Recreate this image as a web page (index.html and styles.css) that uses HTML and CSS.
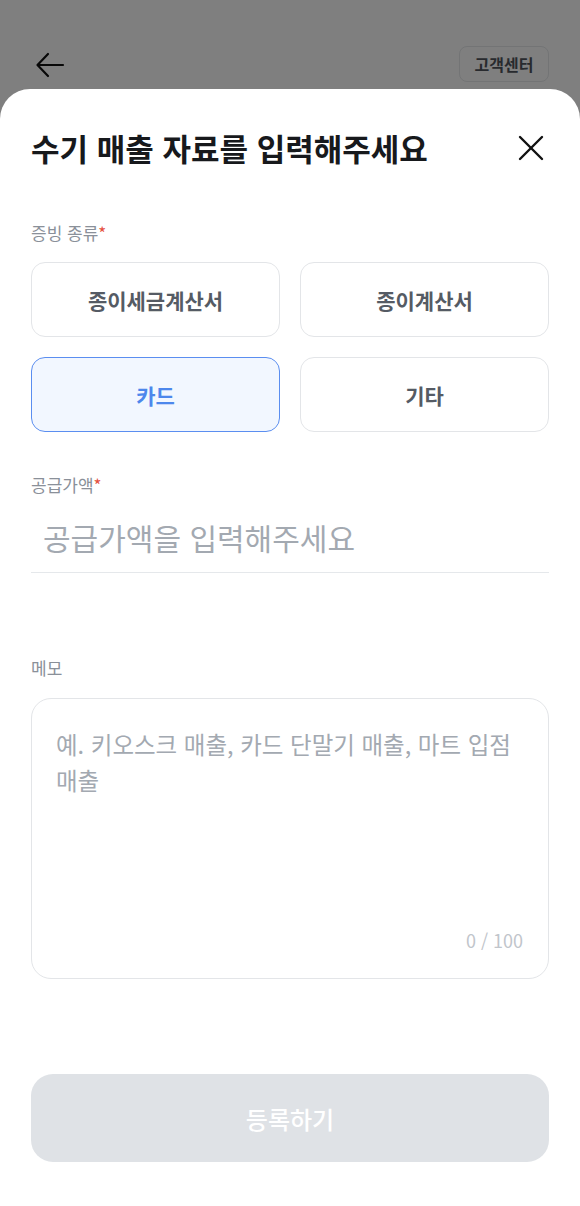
FILE: index.html
```html
<!DOCTYPE html>
<html lang="ko">
<head>
  <meta charset="UTF-8" />
  <meta name="viewport" content="width=device-width, initial-scale=1.0" />
  <title>수기 매출 등록</title>
  <link rel="stylesheet" href="styles.css">
</head>
<body>

<!-- Page header (under the dimmed overlay) -->
<header class="top-bar">
  <button class="back-btn" aria-label="뒤로가기">
    <svg width="32" height="32" viewBox="0 0 32 32" fill="none" stroke="#111" stroke-width="2.2" stroke-linecap="round" stroke-linejoin="round">
      <path d="M29 16H4" />
      <path d="M14 5L3.5 16L14 27" />
    </svg>
  </button>
  <button class="help-btn">고객센터</button>
</header>

<!-- Bottom sheet -->
<div class="overlay">
  <div class="sheet">
    <div class="sheet-head">
      <h1>수기 매출 자료를 입력해주세요</h1>
      <button class="close-btn" aria-label="닫기">
        <svg width="28" height="28" viewBox="0 0 28 28" fill="none" stroke="#111" stroke-width="2.4" stroke-linecap="round">
          <path d="M3 3L25 25" />
          <path d="M25 3L3 25" />
        </svg>
      </button>
    </div>

    <label class="field-label">증빙 종류<span class="req">*</span></label>
    <div class="type-grid" id="typeGrid">
      <button class="type-btn">종이세금계산서</button>
      <button class="type-btn">종이계산서</button>
      <button class="type-btn selected">카드</button>
      <button class="type-btn">기타</button>
    </div>

    <label class="field-label amount-label">공급가액<span class="req">*</span></label>
    <input type="text" class="amount-input" placeholder="공급가액을 입력해주세요" />

    <label class="field-label memo-label">메모</label>
    <div class="memo-box">
      <textarea id="memo" maxlength="100" placeholder="예. 키오스크 매출, 카드 단말기 매출, 마트 입점 매출"></textarea>
      <span class="counter" id="counter">0 / 100</span>
    </div>

    <button class="submit-btn" disabled>등록하기</button>
  </div>
</div>

<script>
  const typeButtons = document.querySelectorAll('.type-btn');
  const memo = document.getElementById('memo');
  const counter = document.getElementById('counter');

  // Only one document type can be selected
  typeButtons.forEach(btn => {
    btn.addEventListener('click', () => {
      typeButtons.forEach(b => b.classList.remove('selected'));
      btn.classList.add('selected');
    });
  });

  memo.addEventListener('input', () => {
    counter.textContent = memo.value.length + ' / 100';
  });
</script>

</body>
</html>
```

FILE: styles.css
```css
* {
  box-sizing: border-box;
}

body {
  margin: 0;
  font-family: "Noto Sans CJK KR", "Noto Sans", sans-serif;
  background: #fff;
  color: #111;
}

button {
  font-family: inherit;
  cursor: pointer;
}

.top-bar {
  display: flex;
  justify-content: space-between;
  align-items: center;
  height: 128px;
  padding: 0 31px 0 34px;
}

.back-btn {
  border: none;
  background: none;
  padding: 0;
  width: 32px;
  height: 32px;
  margin-top: 2px;
}

.help-btn {
  width: 90px;
  height: 36px;
  border: 1.5px solid #e6e8eb;
  border-radius: 8px;
  background: #fff;
  color: #50555d;
  font-size: 16px;
  font-weight: 700;
  padding: 0;
}

.overlay {
  position: fixed;
  inset: 0;
  background: rgba(0, 0, 0, 0.5);
  display: flex;
  flex-direction: column;
}

.sheet {
  flex: 1;
  margin-top: 89px;
  background: #fff;
  border-radius: 30px 30px 0 0;
  padding: 39px 31px 0;
  display: flex;
  flex-direction: column;
}

.sheet-head {
  display: flex;
  justify-content: space-between;
  align-items: center;
  height: 40px;
}

.sheet-head h1 {
  margin: 0;
  font-size: 31px;
  font-weight: 700;
  line-height: 40px;
  color: #17191c;
}

.close-btn {
  border: none;
  background: none;
  padding: 0;
  width: 28px;
  height: 28px;
  margin-right: 4px;
}

.field-label {
  display: block;
  margin-top: 54px;
  font-size: 17px;
  line-height: 22px;
  color: #8a9099;
}

.field-label .req {
  color: #e5503e;
}

.type-grid {
  display: grid;
  grid-template-columns: 1fr 1fr;
  gap: 20px;
  margin-top: 18px;
}

.type-btn {
  height: 75px;
  border: 1.5px solid #e3e5e8;
  border-radius: 14px;
  background: #fff;
  color: #555b64;
  font-size: 21px;
  font-weight: 700;
}

.type-btn.selected {
  background: #f2f7ff;
  border-color: #5b8ef0;
  color: #4d87ec;
}

.amount-label {
  margin-top: 42px;
}

.amount-input {
  display: block;
  width: 100%;
  height: 71px;
  margin-top: 6px;
  border: none;
  border-bottom: 1.5px solid #e5e8eb;
  padding: 0 0 0 12px;
  font-family: inherit;
  font-size: 30px;
  color: #17191c;
  outline: none;
}

.amount-input::placeholder {
  color: #a3a9b1;
}

.memo-label {
  margin-top: 84px;
}

.memo-box {
  display: flex;
  flex-direction: column;
  height: 281px;
  margin-top: 19px;
  border: 1.5px solid #e3e5e8;
  border-radius: 20px;
  padding: 27px 22px 27px 24px;
}

.memo-box textarea {
  flex: 1;
  border: none;
  resize: none;
  outline: none;
  padding: 0;
  font-family: inherit;
  font-size: 23.5px;
  line-height: 36px;
  word-break: keep-all;
  color: #17191c;
}

.memo-box textarea::placeholder {
  color: #a3a9b1;
}

.counter {
  align-self: flex-end;
  margin-right: 3px;
  font-size: 18px;
  line-height: 22px;
  color: #c1c5cb;
}

.submit-btn {
  margin-top: 95px;
  height: 88px;
  border: none;
  border-radius: 22px;
  background: #dfe2e6;
  color: #fff;
  font-size: 24px;
  font-weight: 500;
}
```
